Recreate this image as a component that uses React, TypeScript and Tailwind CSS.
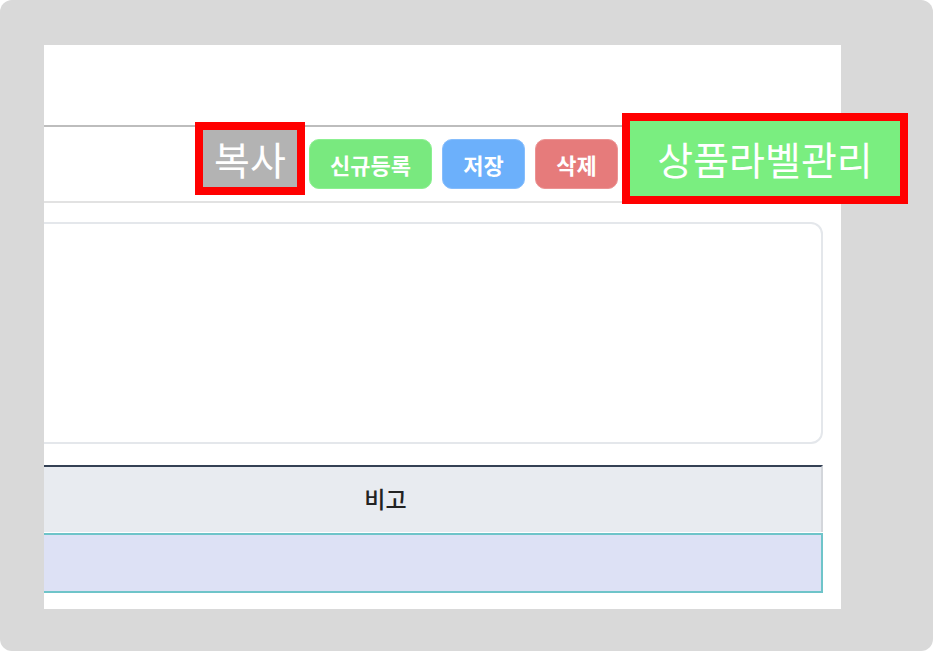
import React from "react";

const font = { fontFamily: '"Noto Sans CJK KR", "Noto Sans", sans-serif' };

function ToolbarButton({ label, color }: { label: string; color: string }) {
  return (
    <button
      className={`mt-[12px] h-[50px] w-[83px] shrink-0 rounded-[10px] border text-[22px] font-bold leading-none text-white ${color}`}
    >
      {label}
    </button>
  );
}

export default function App() {
  return (
    <div className="h-[651px] w-[933px] bg-white" style={font}>
      <div className="h-full w-full overflow-hidden rounded-[12px] bg-[#d9d9d9] pl-[44px] pt-[45px]">
        <div className="h-[564px] w-[797px] bg-white [clip-path:inset(0px_-120px_0px_0px)]">
          <div className="ml-[-94px] mr-0 pt-[80px]">
            {/* toolbar */}
            <div className="flex h-[78px] items-start border-t-2 border-b-2 border-t-[#bdbdbd] border-b-[#e2e2e2] pl-[245px]">
              <div className="mt-[-5px] flex h-[73px] w-[110px] shrink-0 items-center justify-center border-8 border-[#ff0000] bg-[#b3b3b3] text-[39px] leading-none text-white">
                복사
              </div>
              <div className="ml-[4px] flex gap-[10px]">
                <button className="mt-[12px] h-[50px] w-[123px] shrink-0 rounded-[10px] border border-[#8cf091] bg-[#79e97f] text-[22px] font-bold leading-none text-white">
                  신규등록
                </button>
                <ToolbarButton label="저장" color="border-[#86bdfc] bg-[#6cb0fb]" />
                <ToolbarButton label="삭제" color="border-[#ec9393] bg-[#e67b7b]" />
              </div>
              <div className="ml-[4px] mt-[-14px] flex h-[91px] w-[286px] shrink-0 items-center justify-center border-8 border-[#ff0000] bg-[#7aee80] text-[39px] leading-none text-white">
                상품라벨관리
              </div>
            </div>

            <div className="mr-[18px]">
              {/* card */}
              <div className="mt-[19px] h-[222px] rounded-[12px] border-2 border-[#e4e7eb] bg-white" />

              {/* table */}
              <div className="mt-[21px]">
                <div className="flex h-[67px] items-center justify-center border-t-2 border-r-2 border-t-[#344154] border-r-[#d3d6db] bg-[#e8ebf0] pb-[2px] text-[23px] font-medium text-[#222]">
                  비고
                </div>
                <div className="mt-[1px] h-[60px] border-2 border-[#6ec4c9] bg-[#dde1f5]" />
              </div>
            </div>
          </div>
        </div>
      </div>
    </div>
  );
}
